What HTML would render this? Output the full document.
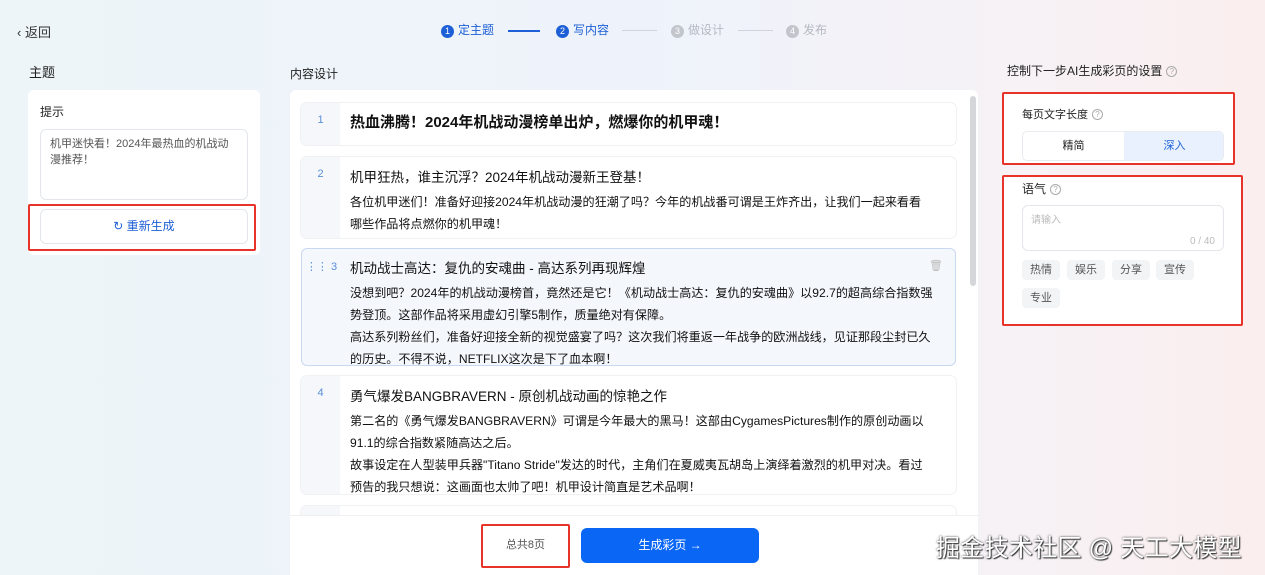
<!DOCTYPE html>
<html><head><meta charset="utf-8"><style>
*{box-sizing:border-box;margin:0;padding:0}
body{width:1265px;height:575px;overflow:hidden;font-family:"Liberation Sans","Noto Sans CJK SC",sans-serif;background:linear-gradient(90deg,#edf5f8 0%,#eef3fb 50%,#f6f2f6 80%,#fbeeee 100%);position:relative;color:#222}
.abs{position:absolute}
.card{background:#fff;border-radius:6px}
.item{position:absolute;left:301px;width:655px;border-radius:6px;background:#fff;overflow:hidden}
.item .num{position:absolute;left:0;top:0;bottom:0;width:39px;background:#f5f7fa;color:#5a8fd8;font-size:11px;text-align:center;padding-top:11px}
.item .c{margin-left:49px;padding:10px 18px 0 0;font-size:12.1px;line-height:22px;color:#111}
.item .t{font-size:13.5px;margin-bottom:2px}
.red{position:absolute;border:2px solid #e8332b;border-radius:2px}
.tag{position:absolute;background:#f3f4f6;border-radius:4px;font-size:11px;color:#555;height:20px;line-height:20px;padding:0 8px}
.q{display:inline-block;width:11px;height:11px;border:1px solid #aaa;border-radius:50%;font-size:8px;line-height:9px;text-align:center;color:#aaa;vertical-align:1px;margin-left:4px}
.step{position:absolute;top:22px;font-size:12px;line-height:16px}
.dot{display:inline-block;width:13px;height:13px;border-radius:50%;color:#fff;font-size:9px;line-height:13px;text-align:center;margin-right:4px;vertical-align:0}
</style></head><body>
<div class="abs" style="left:17px;top:22px;font-size:13px;color:#333">‹ 返回</div>
<div class="step" style="left:441px;color:#1d5fd6"><span class="dot" style="background:#1d5fd6">1</span>定主题</div>
<div class="abs" style="left:508px;top:30px;width:32px;height:2px;background:#1d5fd6"></div>
<div class="step" style="left:556px;color:#1d5fd6"><span class="dot" style="background:#1d5fd6">2</span>写内容</div>
<div class="abs" style="left:622px;top:30px;width:35px;height:1px;background:#cfd4dc"></div>
<div class="step" style="left:671px;color:#b5b9c0"><span class="dot" style="background:#c2c5cb">3</span>做设计</div>
<div class="abs" style="left:738px;top:30px;width:35px;height:1px;background:#cfd4dc"></div>
<div class="step" style="left:786px;color:#b5b9c0"><span class="dot" style="background:#c2c5cb">4</span>发布</div>

<div class="abs" style="left:29px;top:62px;font-size:13px">主题</div>
<div class="abs card" style="left:28px;top:90px;width:232px;height:165px"></div>
<div class="abs" style="left:40px;top:103px;font-size:12px">提示</div>
<div class="abs" style="left:40px;top:129px;width:208px;height:71px;border:1px solid #e3e6ea;border-radius:6px;background:#fff;font-size:11px;color:#555;line-height:16px;padding:6px 8px 6px 9px">机甲迷快看！2024年最热血的机战动漫推荐！</div>
<div class="abs" style="left:40px;top:209px;width:208px;height:35px;border:1px solid #e3e6ea;border-radius:6px;background:#fff;color:#1d5fd6;font-size:12px;text-align:center;line-height:33px">↻ 重新生成</div>
<div class="red" style="left:28px;top:204px;width:228px;height:47px"></div>

<div class="abs" style="left:290px;top:65px;font-size:12px">内容设计</div>
<div class="abs" style="left:290px;top:90px;width:688px;height:485px;background:#fff;border-radius:6px 6px 0 0"></div>
<div class="abs" style="left:970px;top:96px;width:6px;height:190px;background:#d4d6da;border-radius:3px"></div>
<div class="item" style="top:103px;height:42px;box-shadow:0 0 0 1px #f0f1f3"><div class="num">1</div><div class="c" style="padding-top:9px"><div class="t" style="font-weight:bold;font-size:15px">热血沸腾！2024年机战动漫榜单出炉，燃爆你的机甲魂！</div></div></div>
<div class="item" style="top:157px;height:81px;box-shadow:0 0 0 1px #f0f1f3"><div class="num">2</div><div class="c" style="padding-right:24px"><div class="t">机甲狂热，谁主沉浮？2024年机战动漫新王登基！</div>各位机甲迷们！准备好迎接2024年机战动漫的狂潮了吗？今年的机战番可谓是王炸齐出，让我们一起来看看哪些作品将点燃你的机甲魂！</div></div>
<div class="item" style="top:248px;height:118px;background:#f4f7fc;border:1px solid #c9d8f0"><div class="num" style="background:transparent">⋮⋮ 3</div><div class="c" style="margin-left:48px;padding-top:9px"><div class="t">机动战士高达：复仇的安魂曲 - 高达系列再现辉煌</div>没想到吧？2024年的机战动漫榜首，竟然还是它！《机动战士高达：复仇的安魂曲》以92.7的超高综合指数强势登顶。这部作品将采用虚幻引擎5制作，质量绝对有保障。<br>高达系列粉丝们，准备好迎接全新的视觉盛宴了吗？这次我们将重返一年战争的欧洲战线，见证那段尘封已久的历史。不得不说，NETFLIX这次是下了血本啊！</div><div class="abs" style="right:12px;top:10px;color:#bbb;font-size:11px">🗑</div></div>
<div class="item" style="top:376px;height:118px;box-shadow:0 0 0 1px #f0f1f3"><div class="num">4</div><div class="c" style="padding-right:24px"><div class="t">勇气爆发BANGBRAVERN - 原创机战动画的惊艳之作</div>第二名的《勇气爆发BANGBRAVERN》可谓是今年最大的黑马！这部由CygamesPictures制作的原创动画以91.1的综合指数紧随高达之后。<br>故事设定在人型装甲兵器"Titano Stride"发达的时代，主角们在夏威夷瓦胡岛上演绎着激烈的机甲对决。看过预告的我只想说：这画面也太帅了吧！机甲设计简直是艺术品啊！</div></div>
<div class="item" style="top:506px;height:20px;box-shadow:0 0 0 1px #f0f1f3"><div class="num"></div></div>
<div class="abs" style="left:290px;top:515px;width:688px;height:60px;background:#fff;border-top:1px solid #f0f0f0"></div>
<div class="abs" style="left:482px;top:525px;width:87px;height:42px;font-size:11px;color:#555;text-align:center;line-height:40px">总共8页</div>
<div class="red" style="left:481px;top:524px;width:89px;height:44px"></div>
<div class="abs" style="left:581px;top:528px;width:178px;height:35px;background:#0a66f5;border-radius:6px;color:#fff;font-size:12px;text-align:center;line-height:35px">生成彩页 →</div>
<div class="abs" style="left:936px;top:528px;font-size:24px;color:#fff;text-shadow:0 0 2px #333,1px 1px 1px #333;letter-spacing:0.3px">掘金技术社区 @ 天工大模型</div>

<div class="abs" style="left:1007px;top:62px;font-size:12px">控制下一步AI生成彩页的设置<span class="q">?</span></div>
<div class="abs" style="left:1003px;top:93px;width:231px;height:71px;background:#fff"></div>
<div class="abs" style="left:1022px;top:106px;font-size:11px">每页文字长度<span class="q">?</span></div>
<div class="abs" style="left:1022px;top:131px;width:202px;height:30px;border:1px solid #e8ebef;border-radius:5px;background:#fff;overflow:hidden;font-size:11px;line-height:28px"><div style="position:absolute;left:0;width:101px;text-align:center">精简</div><div style="position:absolute;left:101px;width:101px;height:100%;background:#e9f1fe;color:#1d5fd6;text-align:center">深入</div></div>
<div class="red" style="left:1002px;top:92px;width:233px;height:73px"></div>
<div class="abs" style="left:1003px;top:176px;width:239px;height:149px;background:#fff"></div>
<div class="abs" style="left:1022px;top:180px;font-size:12px">语气<span class="q">?</span></div>
<div class="abs" style="left:1022px;top:205px;width:202px;height:46px;border:1px solid #e3e6ea;border-radius:6px;font-size:10px;color:#bbb;padding:5px 8px">请输入<div style="position:absolute;right:8px;bottom:3px">0 / 40</div></div>
<div class="tag" style="left:1022px;top:260px">热情</div>
<div class="tag" style="left:1067px;top:260px">娱乐</div>
<div class="tag" style="left:1112px;top:260px">分享</div>
<div class="tag" style="left:1156px;top:260px">宣传</div>
<div class="tag" style="left:1022px;top:288px">专业</div>
<div class="red" style="left:1002px;top:175px;width:241px;height:151px"></div>
</body></html>
